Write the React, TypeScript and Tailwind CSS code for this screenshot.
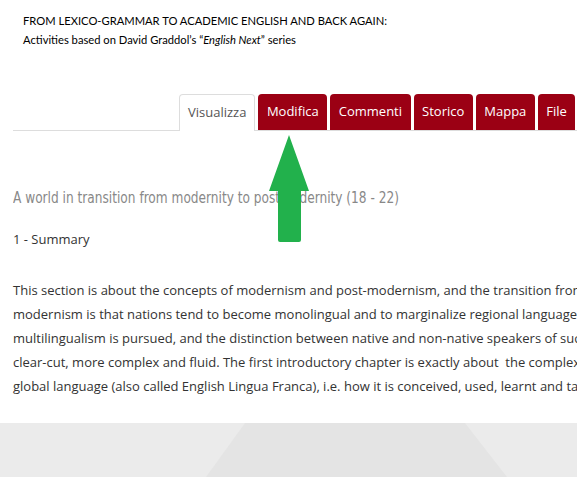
import React from 'react'

const tabs = ['Modifica', 'Commenti', 'Storico', 'Mappa', 'File']

const lines = [
  'This section is about the concepts of modernism and post-modernism, and the transition from',
  'modernism is that nations tend to become monolingual and to marginalize regional languages',
  'multilingualism is pursued, and the distinction between native and non-native speakers of such',
  'clear-cut, more complex and fluid. The first introductory chapter is exactly about\u00a0 the complex',
  'global language (also called English Lingua Franca), i.e. how it is conceived, used, learnt and taught',
]

export default function App() {
  return (
    <div className="relative w-[577px] h-[477px] overflow-hidden bg-white font-['Open_Sans',sans-serif]">
      {/* Document title */}
      <div className="pl-[23px] pt-[11px] font-['Lato',sans-serif] text-[11.2px] leading-[19px] text-black">
        <div>FROM LEXICO-GRAMMAR TO ACADEMIC ENGLISH AND BACK AGAIN:</div>
        <div>
          Activities based on David Graddol’s “<i>English Next</i>” series
        </div>
      </div>

      {/* Tabs */}
      <div className="mt-[45px] ml-[13px] flex items-end border-b border-[#dddddd] whitespace-nowrap">
        <div className="ml-[166px] mb-[-1px] h-[37px] px-[8px] flex items-center rounded-t-[4px] border border-b-0 border-[#dddddd] bg-white text-[13px] text-[#555555]">
          Visualizza
        </div>
        {tabs.map((t) => (
          <div
            key={t}
            className="ml-[3px] h-[36px] px-[8.5px] flex items-center rounded-t-[4px] bg-[#9b0014] text-[13px] text-white shrink-0"
          >
            {t}
          </div>
        ))}
      </div>

      {/* Content */}
      <div className="px-[13px] pt-[56px]">
        <h2 className="origin-left scale-x-[0.82] font-['DejaVu_Sans_Condensed','DejaVu_Sans',sans-serif] text-[16.5px] leading-[22px] text-[#888888] whitespace-nowrap">
          A world in transition from modernity to postmodernity (18 - 22)
        </h2>
        <div className="mt-[20px] text-[13px] leading-[20px] text-[#333333]">1 - Summary</div>
        <div className="mt-[29px] text-[13px] leading-[24px] text-[#333333] whitespace-nowrap">
          {lines.map((l) => (
            <div key={l}>{l}</div>
          ))}
        </div>
      </div>

      {/* Footer band */}
      <div className="absolute left-0 right-0 top-[423px] bottom-0 bg-[#ebebeb]">
        <svg className="absolute inset-0" width="577" height="54" viewBox="0 0 577 54">
          <polygon points="245,0 465,0 507,54 206,54" fill="#e4e4e4" />
        </svg>
      </div>

      {/* Annotation arrow */}
      <svg className="absolute left-[268px] top-[134px]" width="42" height="110" viewBox="0 0 42 110">
        <path
          d="M21 1 L41 57 L33 57 L33 106 Q33 108 31 108 L12 108 Q10 108 10 106 L10 57 L1 57 Z"
          fill="#22b14c"
        />
      </svg>
    </div>
  )
}
